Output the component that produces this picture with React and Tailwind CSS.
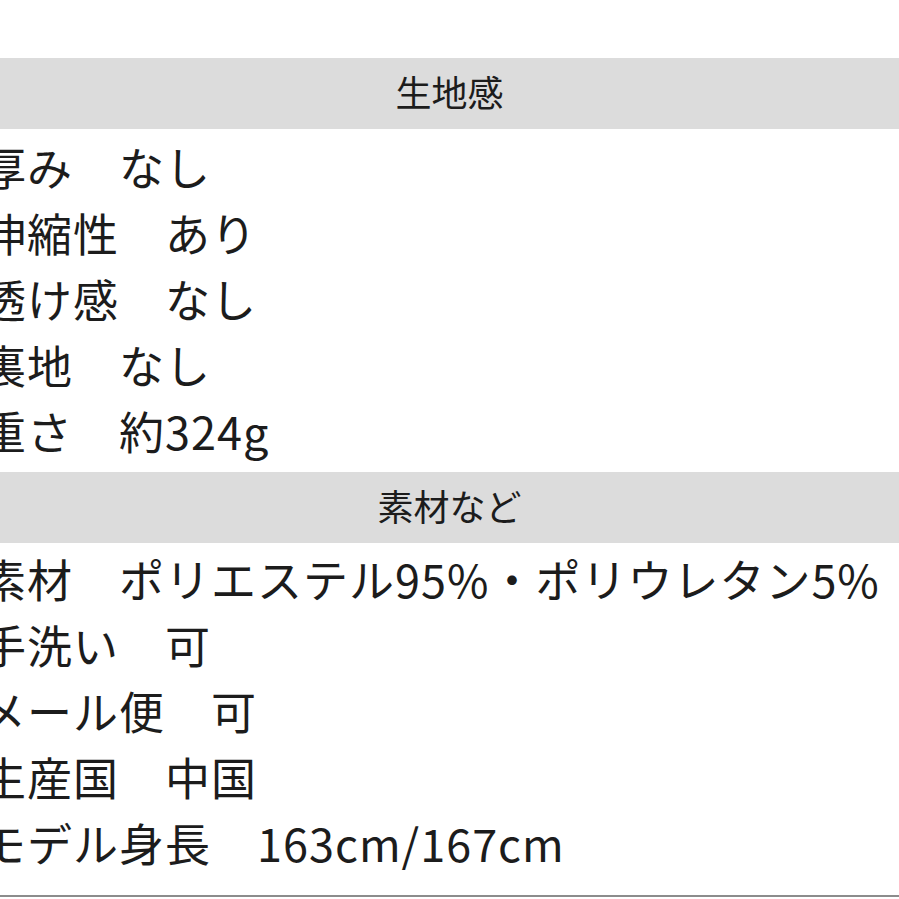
import React from "react";

// Two sections of product specs, each with a grey title bar
const sections = [
  {
    title: "生地感",
    rows: ["厚み　なし", "伸縮性　あり", "透け感　なし", "裏地　なし", "重さ　約324g"],
    pad: "pt-[7px] pb-[6px]",
  },
  {
    title: "素材など",
    rows: [
      "素材　ポリエステル95%・ポリウレタン5%",
      "手洗い　可",
      "メール便　可",
      "生産国　中国",
      "モデル身長　163cm/167cm",
    ],
    pad: "pt-[5px] pb-[17px]",
  },
];

export default function App() {
  return (
    <div
      className="w-[899px] h-[899px] overflow-hidden bg-white text-[#1c1c1c]"
      style={{ fontFamily: '"Noto Sans CJK JP", "Noto Sans", sans-serif' }}
    >
      <div className="h-[58px]" />
      {sections.map((section) => (
        <div key={section.title}>
          <div className="h-[71px] bg-[#dcdcdc] flex items-center justify-center pb-[6px] text-[36px] leading-none">
            {section.title}
          </div>
          <div className={section.pad}>
            {section.rows.map((row) => (
              <div
                key={row}
                className="h-[66px] flex items-center pb-[5px] whitespace-nowrap text-[45px] tracking-[1px] leading-none ml-[-19px]"
              >
                {row}
              </div>
            ))}
          </div>
        </div>
      ))}
      <div className="h-[2px] bg-[#8c8c8c]" />
    </div>
  );
}
